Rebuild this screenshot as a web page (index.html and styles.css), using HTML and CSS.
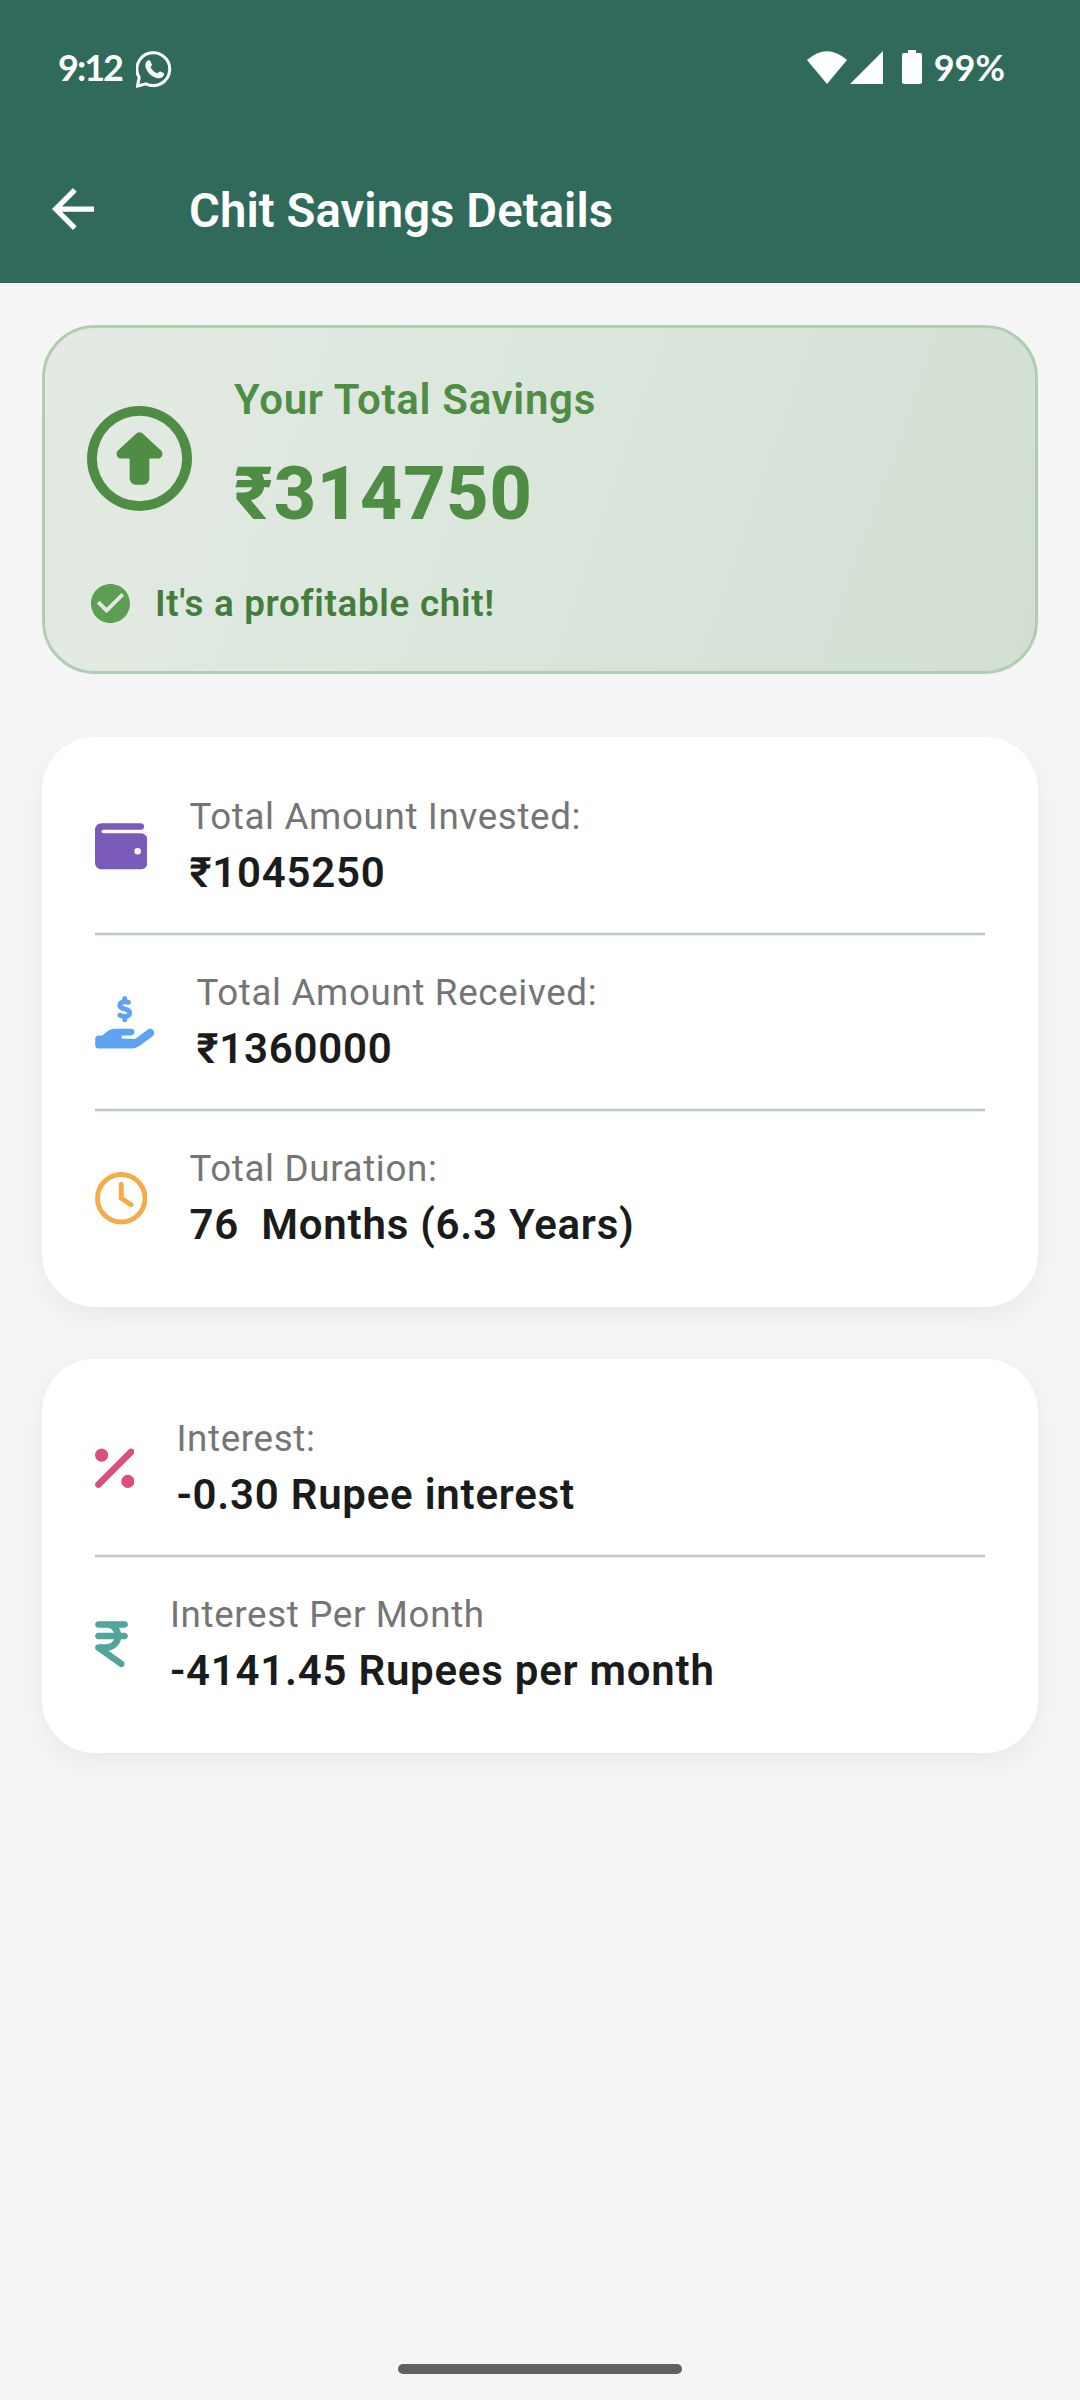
FILE: index.html
```html
<!DOCTYPE html>
<html lang="en">
<head>
<meta charset="utf-8">
<title>Chit Savings Details</title>
<link rel="stylesheet" href="styles.css">
</head>
<body>
<header class="header">
  <div class="status">
    <span class="clock">9:12</span>
    <svg class="wa" viewBox="0 0 36 38"><path d="M3.200 27.500A16.400 16.400 0 1 1 10 33.800L1.500 36Z" fill="none" stroke="#fff" stroke-width="3"/><path d="M11 11c1-1.200 3-.9 3.500.3l1.400 3.300c.3 1-.8 1.800-1.400 2.600 1.500 3 4.200 5.200 7 6.200 1-1 1.800-2.400 3-1.900l3 1.500c1 .5.600 2-.1 3-1.500 2-4.300 2.600-6.500 1.900-6-1.900-9.600-5.600-11.200-10.500-.8-2.200-.2-4.800 1.300-6.400z" fill="#fff"/></svg>
    <span class="spacer"></span>
    <svg class="wifi" viewBox="0 0 40 33"><path d="M0 9Q20-8.500 40 9L20 33Z" fill="#fff"/></svg>
    <svg class="signal" viewBox="0 0 33 33"><path d="M33 0V33H0Z" fill="#fff"/></svg>
    <svg class="battery" viewBox="0 0 20 34"><path d="M6 0h8v3h4q2 0 2 2v27q0 2-2 2H2q-2 0-2-2V5q0-2 2-2h4z" fill="#fff"/></svg>
    <span class="percent">99%</span>
  </div>
  <div class="appbar">
    <svg class="back" viewBox="0 0 16 16"><path d="M16 7H3.830l5.590-5.590L8 0 0 8l8 8 1.410-1.410L3.830 9H16z" fill="#fff"/></svg>
    <h1 class="title">Chit Savings Details</h1>
  </div>
</header>
<main class="content">
  <section class="summary">
    <div class="summary-top">
      <svg class="up" viewBox="0 0 512 512"><path d="M256 48a208 208 0 1 1 0 416 208 208 0 1 1 0-416zm0 464A256 256 0 1 0 256 0a256 256 0 1 0 0 512zM151.200 217.400c-4.600 4.200-7.200 10.100-7.200 16.400c0 12.300 9.900 22.200 22.200 22.200H208v96c0 17.700 14.300 32 32 32h32c17.700 0 32-14.300 32-32V256h41.800c12.300 0 22.200-9.900 22.200-22.200c0-6.300-2.600-12.100-7.200-16.400l-91-84c-3.800-3.500-8.700-5.400-13.900-5.400s-10.100 1.900-13.900 5.400l-91 84z" fill="#4f8d45"/></svg>
      <div class="summary-text">
        <div class="summary-label">Your Total Savings</div>
        <div class="summary-value">₹314750</div>
      </div>
    </div>
    <div class="summary-note">
      <svg class="check" viewBox="2 2 20 20"><path d="M12 2C6.480 2 2 6.480 2 12s4.480 10 10 10 10-4.480 10-10S17.520 2 12 2zm-2 15-5-5 1.410-1.410L10 14.170l7.590-7.590L19 8l-9 9z" fill="#5c9e52"/></svg>
      <span>It's a profitable chit!</span>
    </div>
  </section>
  <section class="card">
    <div class="row">
      <svg class="icon" width="52.5" height="52.5" viewBox="0 0 512 512"><path d="M64 32C28.700 32 0 60.700 0 96V416c0 35.300 28.700 64 64 64H448c35.300 0 64-28.700 64-64V192c0-35.300-28.700-64-64-64H80c-8.800 0-16-7.200-16-16s7.200-16 16-16H448c17.700 0 32-14.300 32-32s-14.300-32-32-32H64zM416 272a32 32 0 1 1 0 64 32 32 0 1 1 0-64z" fill="#7a5bba"/></svg>
      <div class="info"><div class="label">Total Amount Invested:</div><div class="value">₹1045250</div></div>
    </div>
    <hr class="divider">
    <div class="row">
      <svg class="icon" width="59.5" height="52.5" viewBox="0 0 576 512"><path d="M312 24V34.500c6.400 1.200 12.600 2.700 18.200 4.200c12.800 3.400 20.400 16.600 17 29.400s-16.600 20.400-29.400 17c-10.900-2.900-21.100-4.900-30.200-5c-7.300-.1-14.700 1.700-19.400 4.400c-2.100 1.300-3.100 2.400-3.500 3c-.3 .5-.7 1.200-.7 2.800c0 .3 0 .5 0 .6c.2 .2 .9 1.200 3.300 2.600c5.800 3.500 14.400 6.200 27.400 10.100l.9 .3c11.100 3.300 25.900 7.800 37.900 15.300c13.700 8.600 26.100 22.900 26.400 44.900c.3 22.500-11.400 38.900-26.700 48.500c-6.700 4.100-13.900 7-21.300 8.800V232c0 13.300-10.700 24-24 24s-24-10.700-24-24V220.600c-9.500-2.300-18.200-5.300-25.600-7.800c-2.100-.7-4.100-1.400-6-2c-12.600-4.200-19.400-17.800-15.200-30.400s17.800-19.400 30.400-15.200c2.600 .9 5 1.700 7.300 2.500c13.600 4.600 23.400 7.900 33.900 8.300c8 .3 15.100-1.600 19.200-4.100c1.900-1.200 2.800-2.200 3.200-2.900c.4-.6 .9-1.800 .8-4.100l0-.2c0-1 0-2.100-4-4.600c-5.700-3.600-14.300-6.400-27.100-10.300l-1.900-.6c-10.800-3.200-25-7.500-36.400-14.400c-13.500-8.100-26.500-22-26.600-44.100c-.1-22.900 12.900-38.600 27.700-47.400c6.400-3.800 13.300-6.400 20.200-8.200V24c0-13.300 10.700-24 24-24s24 10.700 24 24zM568.200 336.300c13.100 17.800 9.300 42.800-8.500 55.900L433.100 485.500c-23.400 17.200-51.600 26.500-80.700 26.500H192 32c-17.700 0-32-14.300-32-32V416c0-17.700 14.300-32 32-32H68.800l44.900-36c22.700-18.200 50.900-28 80-28H272h16 64c17.700 0 32 14.300 32 32s-14.300 32-32 32H288 272c-8.800 0-16 7.200-16 16s7.200 16 16 16H392.600l119.700-88.200c17.800-13.100 42.800-9.300 55.900 8.500z" fill="#5da3f1"/></svg>
      <div class="info"><div class="label">Total Amount Received:</div><div class="value">₹1360000</div></div>
    </div>
    <hr class="divider">
    <div class="row">
      <svg class="icon" width="52.5" height="52.5" viewBox="0 0 512 512"><path d="M464 256A208 208 0 1 1 48 256a208 208 0 1 1 416 0zM0 256a256 256 0 1 0 512 0A256 256 0 1 0 0 256zM232 120V256c0 8 4 15.500 10.700 20l96 64c11 7.400 25.900 4.400 33.300-6.700s4.400-25.900-6.700-33.300L280 243.200V120c0-13.300-10.700-24-24-24s-24 10.700-24 24z" fill="#f4ac48"/></svg>
      <div class="info"><div class="label">Total Duration:</div><div class="value">76&nbsp; Months (6.3 Years)</div></div>
    </div>
  </section>
  <section class="card">
    <div class="row">
      <svg class="icon" width="39.5" height="52.5" viewBox="0 0 384 512"><path d="M374.600 118.600c12.500-12.500 12.500-32.800 0-45.300s-32.800-12.500-45.300 0l-320 320c-12.500 12.500-12.500 32.800 0 45.300s32.800 12.500 45.300 0l320-320zM128 128A64 64 0 1 0 0 128a64 64 0 1 0 128 0zM384 384a64 64 0 1 0-128 0 64 64 0 1 0 128 0z" fill="#db507b"/></svg>
      <div class="info"><div class="label">Interest:</div><div class="value">-0.30 Rupee interest</div></div>
    </div>
    <hr class="divider">
    <div class="row">
      <svg class="icon" width="33" height="52.5" viewBox="0 0 320 512"><path d="M0 64C0 46.300 14.300 32 32 32H96h16H288c17.700 0 32 14.300 32 32s-14.300 32-32 32H231.800c9.600 14.400 16.700 30.600 20.700 48H288c17.700 0 32 14.300 32 32s-14.300 32-32 32H252.400c-13.200 58.300-61.900 103.200-122.200 110.900L274.600 422c14.400 10.300 17.700 30.300 7.400 44.600s-30.300 17.700-44.600 7.400L13.400 314C2.100 306-2.700 291.500 1.500 278.200S18.100 256 32 256h80c32.800 0 61-19.700 73.300-48H32c-17.700 0-32-14.300-32-32s14.300-32 32-32H185.300C173 115.700 144.800 96 112 96H96 32C14.300 96 0 81.700 0 64z" fill="#52a59b"/></svg>
      <div class="info"><div class="label">Interest Per Month</div><div class="value">-4141.45 Rupees per month</div></div>
    </div>
  </section>
</main>
<div class="handle"></div>
</body>
</html>
```
FILE: styles.css
```css
* { box-sizing: border-box; }
body { margin: 0; width: 1080px; height: 2400px; display: flex; flex-direction: column; background: #f5f5f5; font-family: Roboto, "Noto Sans", sans-serif; color: #191c1b; }
svg { display: block; flex: none; }
.header { height: 283px; background: #306a5b; color: #fff; }
.status { height: 134px; display: flex; align-items: center; padding: 0 75px 0 58px; font-family: Lato, sans-serif; font-weight: 700; font-size: 36px; }
.clock { flex: none; width: 64px; margin-right: 14px; letter-spacing: -2px; }
.wa { width: 36px; height: 38px; margin-top: 4px; }
.spacer { flex: 1; }
.wifi { width: 40px; height: 33px; }
.signal { width: 33px; height: 33px; margin-left: 3px; }
.battery { width: 20px; height: 34px; margin-left: 19px; }
.percent { margin-left: 12px; }
.appbar { height: 149px; display: flex; align-items: center; padding: 1px 0 0 52px; }
.back { width: 42px; height: 42px; }
.title { margin: 3px 0 0 95px; font-size: 47.25px; font-weight: 600; line-height: 60px; letter-spacing: .08px; }
.content { flex: 1; padding: 42px 42px 0; }
.summary { height: 349px; padding: 38px 42px; border: 3px solid #b2ceb0; border-radius: 53px; background: linear-gradient(109deg, #e4eae3, #dce7de 40%, #d2dfd2); margin-bottom: 63px; color: #4f8d45; }
.summary-top { display: flex; align-items: center; gap: 42px; height: 184px; }
.up { width: 105px; height: 105px; }
.summary-text { padding-bottom: 5px; }
.summary-label { font-size: 42px; font-weight: 600; line-height: 60px; letter-spacing: .7px; margin-bottom: 16px; }
.summary-value { font-size: 73.5px; font-weight: 800; line-height: 96px; letter-spacing: .8px; }
.summary-note { display: flex; align-items: center; gap: 25px; height: 54px; margin-top: 26px; padding-left: 4px; font-size: 36.75px; font-weight: 600; letter-spacing: .7px; color: #447d3b; }
.check { width: 39px; height: 39px; }
.card { padding: 53px 53px 52px 52.5px; border-radius: 53px; background: #fff; box-shadow: 0 10px 26px rgba(0, 0, 0, .05); margin-bottom: 52px; }
.row { height: 113px; display: flex; align-items: center; gap: 42.4px; }
.label { font-size: 36.75px; line-height: 52px; letter-spacing: .65px; color: #757575; }
.value { font-size: 42px; font-weight: 600; line-height: 60px; letter-spacing: .76px; }
.divider { margin: 29px 0 30px; border: 0; height: 4px; background: linear-gradient(#e9edeb 0 1px, #bfc9c4 1px 3px, #e9edeb 3px 4px); }
.handle { width: 284px; height: 10px; margin: 0 auto 26px; border-radius: 5px; background: #616161; }
```
